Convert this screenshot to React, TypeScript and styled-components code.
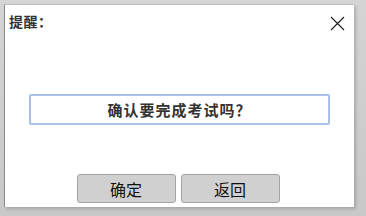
import { FC } from "react";
import styled, { createGlobalStyle } from "styled-components";

const Global = createGlobalStyle`
  html, body {
    margin: 0;
    padding: 0;
    width: 366px;
    height: 216px;
    overflow: hidden;
    background: #c4c4c4;
  }
  body {
    font-family: "Noto Sans CJK SC", "Liberation Sans", sans-serif;
  }
`;

const App: FC = () => {
  return (
    <>
      <Global />
      <Sbackdrop>
        <Sdialog>
          <Shead>
            <Stitle>提醒：</Stitle>
            <Sclose aria-label="close">
              <svg width="15" height="15" viewBox="0 0 15 15">
                <path d="M1 1 L14 14 M14 1 L1 14" stroke="#222" strokeWidth="1.2" fill="none" />
              </svg>
            </Sclose>
          </Shead>
          <Sbody>
            <Smessage>确认要完成考试吗？</Smessage>
          </Sbody>
          <Sfoot>
            <Sbutton>确定</Sbutton>
            <Sbutton>返回</Sbutton>
          </Sfoot>
        </Sdialog>
      </Sbackdrop>
    </>
  );
};

export default App;

const Sbackdrop = styled.div`
  width: 366px;
  height: 216px;
  padding: 4px 12px 9px 4px;
  box-sizing: border-box;
  background: linear-gradient(to bottom, #d4d4d4 0%, #c8c8c8 100%);
`;

const Sdialog = styled.div`
  width: 350px;
  height: 203px;
  background: #fff;
  border-left: 1px solid #8a8a8a;
  border-top: 1px solid #bdbdbd;
  box-sizing: border-box;
  display: flex;
  flex-direction: column;
  box-shadow: 2px 2px 3px rgba(0, 0, 0, 0.18);
`;

const Shead = styled.div`
  height: 28px;
  display: flex;
  align-items: center;
  justify-content: space-between;
  padding: 2px 9px 0 4px;
`;

const Stitle = styled.span`
  font-size: 14px;
  font-weight: bold;
  color: #333;
  margin-top: -1px;
  letter-spacing: 0.5px;
`;

const Sclose = styled.span`
  display: flex;
  margin-top: 5px;
`;

const Sbody = styled.div`
  flex: 1;
  display: flex;
  justify-content: center;
  padding-top: 59px;
`;

const Smessage = styled.div`
  width: 301px;
  height: 31px;
  box-sizing: border-box;
  border: 2px solid #a9c1e6;
  border-radius: 2px;
  display: flex;
  align-items: center;
  justify-content: center;
  font-size: 15px;
  font-weight: bold;
  color: #333;
  letter-spacing: 1px;
`;

const Sfoot = styled.div`
  display: flex;
  justify-content: center;
  gap: 5px;
  padding: 0 0 4px 0;
  margin-left: -3px;
`;

const Sbutton = styled.button`
  width: 99px;
  height: 29px;
  background: #d0d0d0;
  border: 1px solid #a3a3a3;
  border-radius: 3px;
  font-family: "Noto Sans CJK SC", "Liberation Sans", sans-serif;
  font-size: 16px;
  color: #111;
  padding: 0;
  cursor: pointer;
`;
